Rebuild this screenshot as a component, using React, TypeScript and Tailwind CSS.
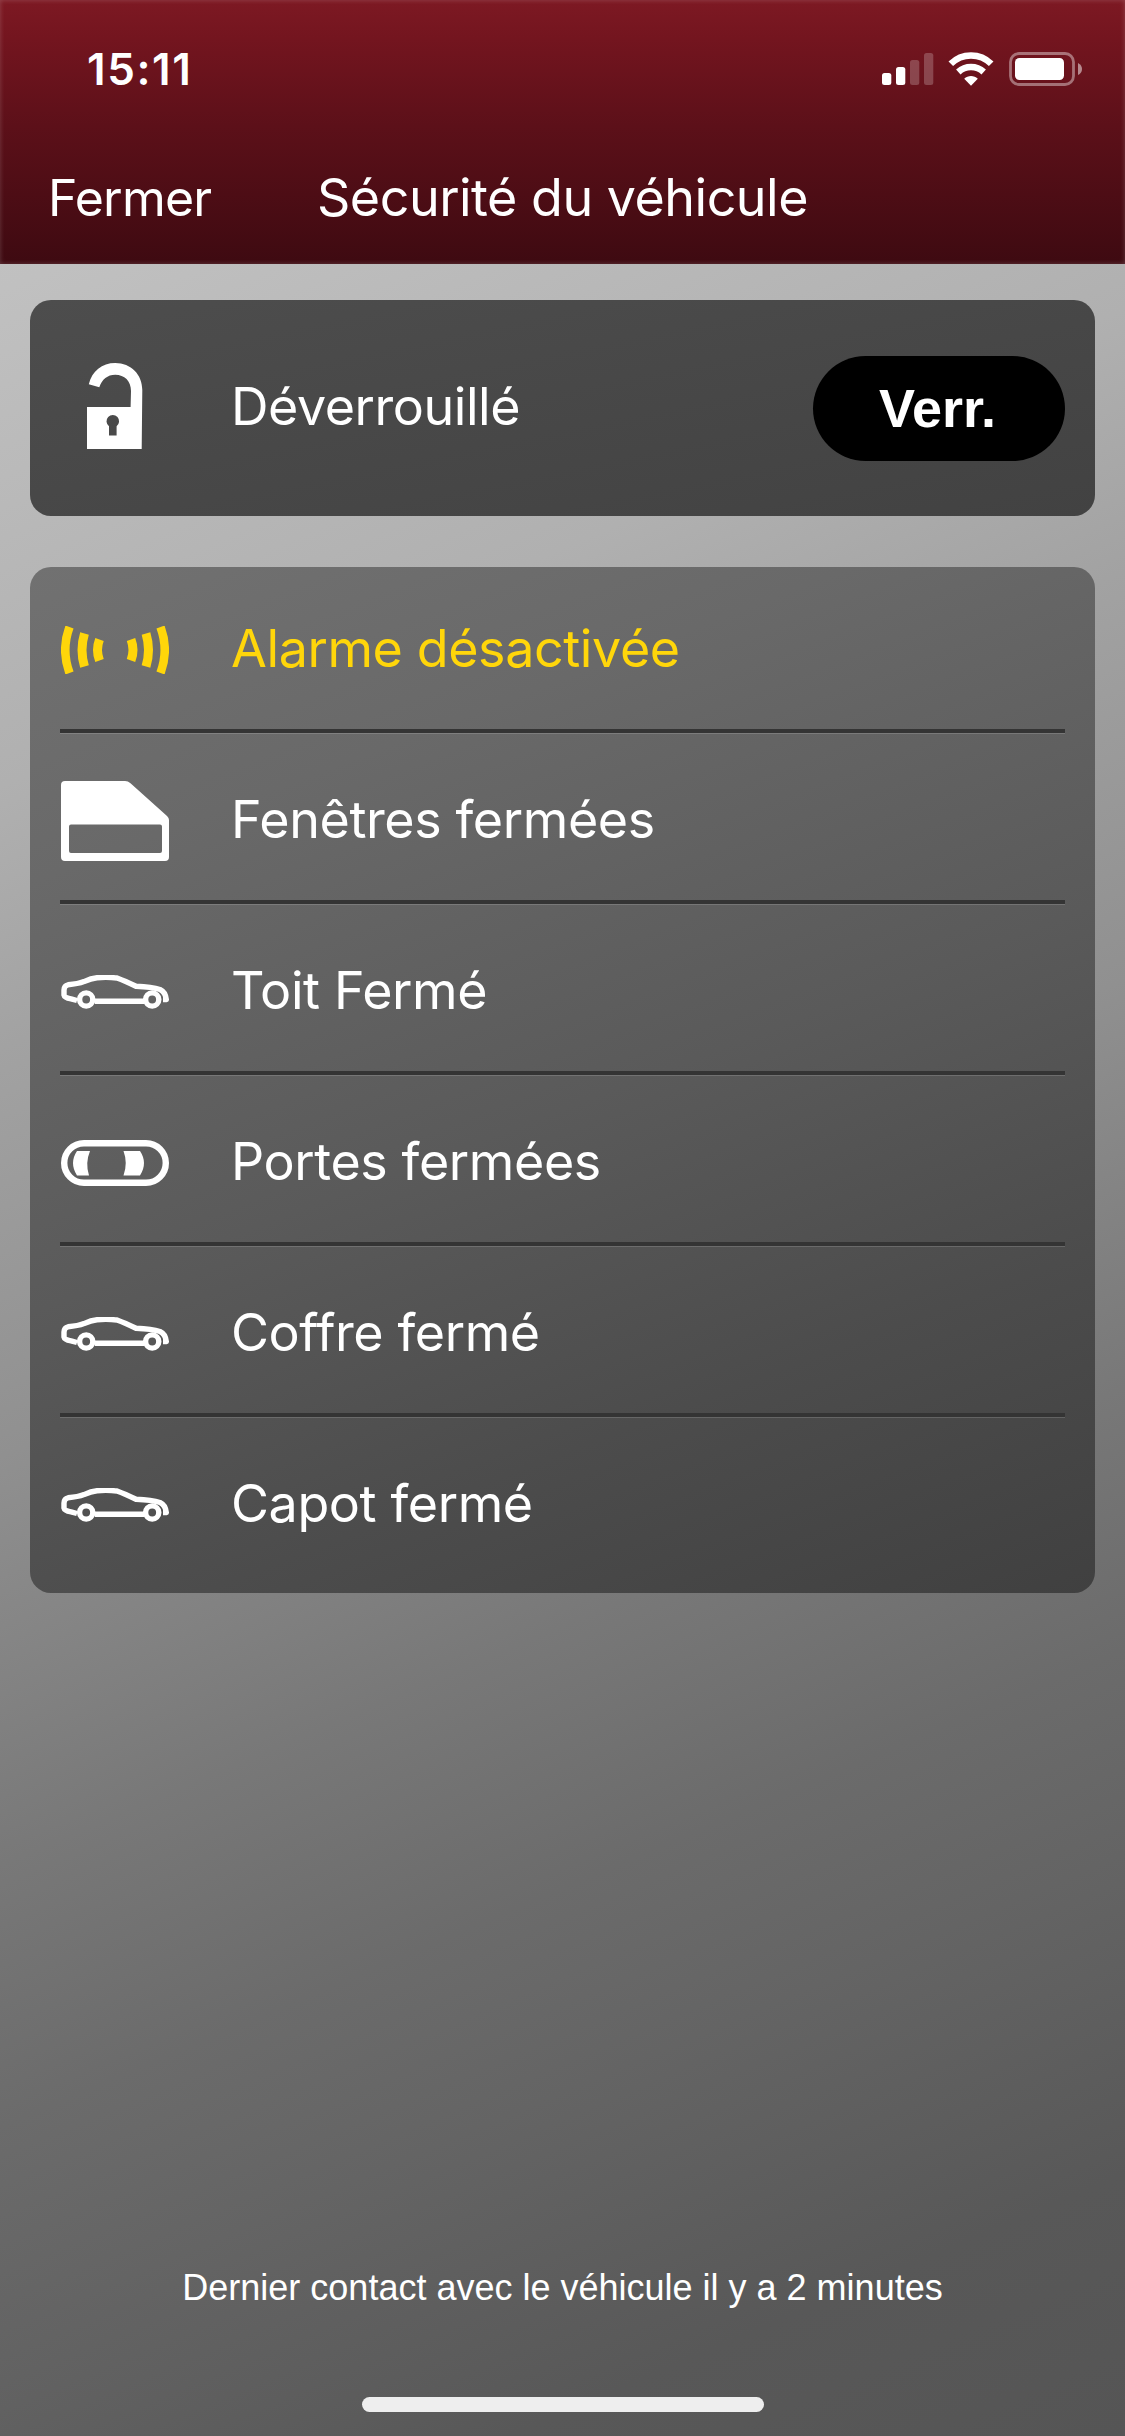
import type { ReactNode } from "react";

interface StatusRow {
  label: string;
  icon: ReactNode;
  highlight?: boolean;
}

function CarSideIcon() {
  return (
    <svg viewBox="0 0 108 34" className="w-[108px] h-[34px]" fill="none" stroke="#fff">
      <path
        strokeWidth="5.400"
        strokeLinejoin="round"
        d="M16 25.5 L10 23.8 Q3.500 22.800 3 20 V15 Q3.200 10.500 7 9.800 Q17 9 23 6.600 Q30 3.200 36 2.700 Q47 2 56 3 Q64 6 75 11.300 Q91 12 99 14.500 Q104.500 17 105.300 24.600 H102 M34 26.300 H83"
      />
      <circle cx="25.2" cy="24.5" r="6.600" strokeWidth="5.400" />
      <circle cx="91.2" cy="24.5" r="6.600" strokeWidth="5.400" />
    </svg>
  );
}

function AlarmIcon() {
  return (
    <svg viewBox="0 0 108 48" className="w-[108px] h-[48px]" fill="none" stroke="#ffd60a">
      <path strokeWidth="8.600" d="M8.500 1 Q0 24 8.500 47" />
      <path strokeWidth="9" d="M23.500 7.500 Q18.500 24 23.500 40.500" />
      <path strokeWidth="9" d="M38.500 13.500 Q34.500 24 38.500 34.500" />
      <path strokeWidth="9" d="M70 13.500 Q74 24 70 34.500" />
      <path strokeWidth="9" d="M85 7.500 Q90 24 85 40.500" />
      <path strokeWidth="8.600" d="M99.500 1 Q108 24 99.500 47" />
    </svg>
  );
}

function WindowIcon() {
  return (
    <svg viewBox="0 0 108 80" className="w-[108px] h-[80px]" fill="#fff">
      <path
        fillRule="evenodd"
        d="M4 0 H64 Q67 0 69.5 2.2 L106 35 Q108 36.800 108 39 V76 Q108 80 104 80 H4 Q0 80 0 76 V4 Q0 0 4 0 Z M10 43.500 Q8 43.500 8 45.500 V70 Q8 72 10 72 H99 Q101 72 101 70 V45.500 Q101 43.500 99 43.500 Z"
      />
    </svg>
  );
}

function CarTopIcon() {
  return (
    <svg viewBox="0 0 108 46" className="w-[108px] h-[46px]" fill="#fff">
      <rect x="3.2" y="3.2" width="101.600" height="39.600" rx="19.800" fill="none" stroke="#fff" strokeWidth="6.400" />
      <path d="M16 11 H29 Q24 23 28 35.500 H16 Q8 23 16 11 Z" />
      <path d="M62.500 11 H79 Q87 23 79 35.500 H62.500 Q67 23 62.500 11 Z" />
    </svg>
  );
}

function UnlockIcon() {
  return (
    <svg viewBox="0 0 56 86" className="w-[56px] h-[86px]" fill="#fff">
      <path
        fillRule="evenodd"
        d="M1.800 21.300 C5 8 15 0 28.200 0 C44 0 55.300 11.500 55.300 27 L54.700 86 H0 V44 H43.600 L44 28 C44 18 37.500 11.800 28.200 11.800 C20.500 11.800 15 16.500 12.300 24.300 Z M22 63.200 V72.500 H29.600 V63.200 A6.300 6.300 0 1 0 22 63.200 Z"
      />
    </svg>
  );
}

function StatusIcons() {
  return (
    <div className="flex items-center">
      <svg viewBox="0 0 52 34" className="w-[52px] h-[34px]" fill="#fff">
        <rect x="0" y="21" width="9.300" height="12" rx="2.500" />
        <rect x="14" y="15" width="9.300" height="18" rx="2.500" />
        <rect x="28" y="8" width="9.300" height="25" rx="2.500" opacity=".22" />
        <rect x="42" y="1" width="9.300" height="32" rx="2.500" opacity=".22" />
      </svg>
      <svg viewBox="0 0 46 34" className="ml-[14px] w-[46px] h-[34px]" fill="none" stroke="#fff">
        <path strokeWidth="6.500" d="M2.800 11.800 C14 .7 32 .7 43.200 11.800" />
        <path strokeWidth="6.500" d="M10.300 20 C17.500 13.300 28.500 13.300 35.700 20" />
        <path fill="#fff" stroke="none" d="M23 33.800 L16.200 26.800 C20 23 26 23 29.800 26.800 Z" />
      </svg>
      <svg viewBox="0 0 74 34" className="ml-[15px] w-[74px] h-[34px]" fill="none">
        <rect x="1.500" y="1.500" width="63" height="31" rx="8.500" stroke="#fff" strokeOpacity=".4" strokeWidth="2.800" />
        <rect x="6" y="6" width="49" height="22" rx="4.500" fill="#fff" />
        <path d="M69 11 Q73 13 73 17 Q73 21 69 23 Z" fill="#fff" fillOpacity=".5" />
      </svg>
    </div>
  );
}

const rows: StatusRow[] = [
  { label: "Alarme désactivée", icon: <AlarmIcon />, highlight: true },
  { label: "Fenêtres fermées", icon: <WindowIcon /> },
  { label: "Toit Fermé", icon: <CarSideIcon /> },
  { label: "Portes fermées", icon: <CarTopIcon /> },
  { label: "Coffre fermé", icon: <CarSideIcon /> },
  { label: "Capot fermé", icon: <CarSideIcon /> },
];

export default function App() {
  return (
    <div className="flex flex-col w-[1125px] h-[2436px] overflow-hidden font-['Inter',sans-serif] text-white bg-[linear-gradient(157deg,#c6c6c6_0%,#c0c0c0_10%,#b0b0b0_27%,#a2a2a2_36%,#909090_50%,#787878_64%,#6b6b6b_73%,#646464_80%,#585858_91%,#555555_100%)]">
      <header className="h-[264px] shrink-0 bg-[linear-gradient(180deg,#7d1923_0%,#74151f_14%,#5c1019_48%,#3e0a11_100%)] shadow-[inset_0_0_5px_rgba(255,255,255,0.2)]">
        <div className="flex items-center justify-between h-[138px] pl-[87px] pr-[42px]">
          <span className="text-[44px] leading-none font-semibold tracking-[1.6px]">15:11</span>
          <StatusIcons />
        </div>
        <div className="flex items-center h-[119px]">
          <button className="w-[317px] pl-[48px] text-left text-[50px] leading-none tracking-[-0.8px]">Fermer</button>
          <h1 className="text-[52px] leading-none tracking-[-0.5px]">Sécurité du véhicule</h1>
        </div>
      </header>

      <main className="flex flex-col px-[30px] pt-9">
        <section className="flex items-center h-[216px] px-[30px] rounded-[21px] bg-linear-to-br from-[#4d4d4d] to-[#424242]">
          <div className="w-[171px] pl-[27px] pb-[4px]">
            <UnlockIcon />
          </div>
          <span className="flex-1 pb-[3px] text-[52px] leading-none tracking-[-0.45px]">Déverrouillé</span>
          <button className="w-[252px] h-[105px] pr-[3px] rounded-full bg-black font-['Liberation_Sans',sans-serif] text-[54px] font-bold leading-none">
            Verr.
          </button>
        </section>

        <section className="mt-[51px] h-[1026px] px-[30px] rounded-[21px] bg-[linear-gradient(159deg,#717171_0%,#696969_22%,#5a5a5a_52%,#4c4c4c_76%,#404040_100%)]">
          {rows.map((row, index) => (
            <div key={row.label} className="h-[171px]">
              <div className="flex items-center h-[162px] pt-[2px]">
                <div className="w-[171px] pl-px pt-px">{row.icon}</div>
                <span
                  className={
                    row.highlight
                      ? "text-[52px] leading-none tracking-[-0.4px] text-[#ffd60a]"
                      : "text-[52px] leading-none tracking-[-0.4px] [font-variant-ligatures:none]"
                  }
                >
                  {row.label}
                </span>
              </div>
              {index < rows.length - 1 && <div className="h-[5px] bg-[#343434] bg-clip-padding border-b border-white/15" />}
            </div>
          ))}
        </section>
      </main>

      <footer className="flex flex-col items-center mt-auto pb-6">
        <p className="font-['Liberation_Sans',sans-serif] text-[36px] leading-none">
          Dernier contact avec le véhicule il y a 2 minutes
        </p>
        <div className="mt-[91px] w-[402px] h-[15px] rounded-full bg-[#eeeeee]" />
      </footer>
    </div>
  );
}
